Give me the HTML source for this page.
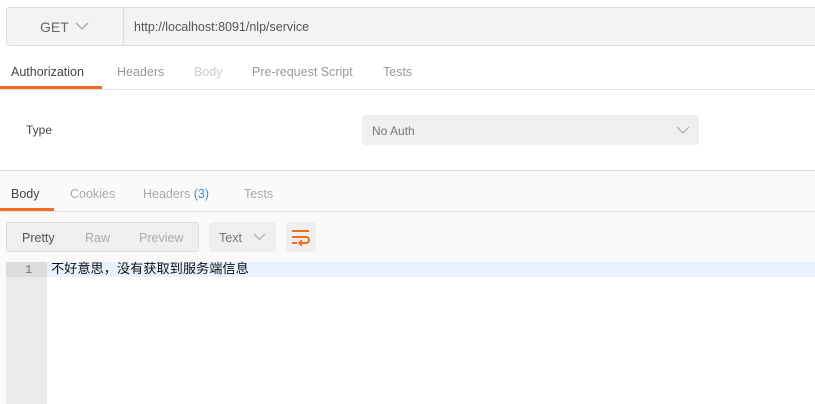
<!DOCTYPE html>
<html><head><style>
*{margin:0;padding:0;box-sizing:border-box}
body{width:815px;height:404px;overflow:hidden;background:#fff;font-family:"Liberation Sans","Noto Sans CJK SC",sans-serif;font-size:12.5px;color:#505050;position:relative}
.a{position:absolute}
</style></head><body>
<div class="a" style="left:6px;top:7px;width:820px;height:39px;background:#f3f3f3;border:1px solid #dcdcdc;border-radius:3px"></div>
<div class="a" style="left:123px;top:8px;width:1px;height:37px;background:#dcdcdc"></div>
<div class="a" style="left:40px;top:19px;font-size:14px;color:#666">GET</div>
<svg class="a" style="left:75px;top:22px" width="14" height="9"><path d="M1 1 L7 7 L13 1" fill="none" stroke="#aaa" stroke-width="1.3"/></svg>
<div class="a" style="left:134px;top:20px;color:#555">http://localhost:8091/nlp/service</div>

<div class="a" style="left:11px;top:65px;color:#444">Authorization</div>
<div class="a" style="left:117px;top:65px;color:#999">Headers</div>
<div class="a" style="left:194px;top:65px;color:#ccc">Body</div>
<div class="a" style="left:252px;top:65px;color:#999">Pre-request Script</div>
<div class="a" style="left:383px;top:65px;color:#999">Tests</div>
<div class="a" style="left:0;top:86px;width:102px;height:3px;background:#f26b21"></div>
<div class="a" style="left:0;top:89px;width:815px;height:1px;background:#e0e0e0"></div>

<div class="a" style="left:26px;top:123px;font-size:12px;color:#444">Type</div>
<div class="a" style="left:362px;top:115px;width:337px;height:30px;background:#efefef;border-radius:3px"></div>
<div class="a" style="left:372px;top:124px;font-size:12px;color:#777">No Auth</div>
<svg class="a" style="left:676px;top:126px" width="14" height="9"><path d="M1 1 L7 7 L13 1" fill="none" stroke="#aaa" stroke-width="1.2"/></svg>

<div class="a" style="left:0;top:170px;width:815px;height:234px;background:#fafafa;border-top:1px solid #ddd"></div>
<div class="a" style="left:11px;top:187px;color:#444">Body</div>
<div class="a" style="left:70px;top:187px;color:#aaa">Cookies</div>
<div class="a" style="left:143px;top:187px;color:#aaa">Headers <span style="color:#3d8fd9">(3)</span></div>
<div class="a" style="left:244px;top:187px;color:#aaa">Tests</div>
<div class="a" style="left:0;top:208px;width:54px;height:3px;background:#f26b21"></div>
<div class="a" style="left:0;top:211px;width:815px;height:1px;background:#e0e0e0"></div>

<div class="a" style="left:6px;top:222px;width:193px;height:30px;background:#efefef;border:1px solid #ddd;border-radius:3px"></div>
<div class="a" style="left:22px;top:231px;color:#555">Pretty</div>
<div class="a" style="left:85px;top:231px;color:#aaa">Raw</div>
<div class="a" style="left:139px;top:231px;color:#aaa">Preview</div>
<div class="a" style="left:209px;top:222px;width:67px;height:30px;background:#efefef;border-radius:3px"></div>
<div class="a" style="left:219px;top:231px;color:#777">Text</div>
<svg class="a" style="left:253px;top:233px" width="13" height="8"><path d="M1 1 L6.5 6.5 L12 1" fill="none" stroke="#aaa" stroke-width="1.2"/></svg>
<div class="a" style="left:286px;top:222px;width:30px;height:30px;background:#efefef;border-radius:3px"></div>
<svg class="a" style="left:291px;top:228px" width="20" height="18"><path d="M1 3H18M1 9H15a3 3 0 0 1 0 6H9M1 15H6" fill="none" stroke="#f26b21" stroke-width="2"/><path d="M11 12L8 15L11 18" fill="none" stroke="#f26b21" stroke-width="1.6"/></svg>

<div class="a" style="left:6px;top:262px;width:809px;height:142px;background:#fff"></div>
<div class="a" style="left:6px;top:262px;width:41px;height:142px;background:#ebebeb"></div>
<div class="a" style="left:6px;top:262px;width:41px;height:15px;background:#dcdcdc"></div>
<div class="a" style="left:47px;top:262px;width:768px;height:15px;background:#e8f2fe"></div>
<div class="a" style="left:25px;top:263px;font-size:12px;color:#777;font-family:'Liberation Mono',monospace">1</div>
<div class="a" style="left:51px;top:262px;font-size:13.2px;color:#111;font-family:'Liberation Mono','Noto Sans CJK SC',monospace;line-height:15px">不好意思，没有获取到服务端信息</div>
</body></html>
